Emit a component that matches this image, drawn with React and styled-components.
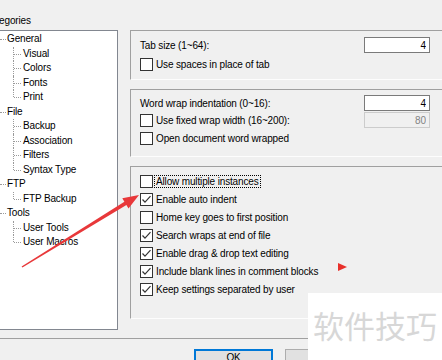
import React from "react";
import styled, { createGlobalStyle } from "styled-components";

const GlobalStyle = createGlobalStyle`
  html, body {
    margin: 0;
    padding: 0;
    background: #f0f0f0;
  }
  body {
    font-family: "Liberation Sans", Arial, sans-serif;
    font-size: 10px;
    letter-spacing: -0.15px;
    color: #000;
  }
`;

const Screen = styled.div`
  position: relative;
  width: 442px;
  height: 360px;
  overflow: hidden;
  background: #f0f0f0;
`;

const Dialog = styled.div`
  margin-left: -20px;
  width: 480px;
  padding-top: 15px;
`;

const Main = styled.div`
  display: flex;
  align-items: flex-start;
  gap: 12px;
`;

const LeftColumn = styled.div`
  width: 138px;
  display: flex;
  flex-direction: column;
`;

const CategoryLabel = styled.div`
  height: 12px;
  line-height: 12px;
  margin-bottom: 3px;
  padding-left: 4px;
`;

const TreeBox = styled.div`
  box-sizing: border-box;
  height: 300px;
  background: #fff;
  border: 1px solid #828790;
  padding-top: 1px;
`;

const TreeRow = styled.div`
  position: relative;
  height: 14.5px;
  line-height: 14.5px;
  white-space: nowrap;
  padding-left: ${(p) => (p.$level === 0 ? 26 : 42)}px;

  &::before {
    content: "";
    position: absolute;
    display: ${(p) => (p.$level === 0 ? "none" : "block")};
    left: 32px;
    top: 0;
    height: ${(p) => (p.$last ? "50%" : "100%")};
    border-left: 1px dotted #9a9a9a;
  }

  &::after {
    content: "";
    position: absolute;
    left: ${(p) => (p.$level === 0 ? 19 : 33)}px;
    top: 50%;
    width: ${(p) => (p.$level === 0 ? 6 : 7)}px;
    border-top: 1px dotted #9a9a9a;
  }
`;

const RightColumn = styled.div`
  width: 320px;
  margin-top: 15px;
  display: flex;
  flex-direction: column;
  gap: 9px;
`;

const GroupBox = styled.div`
  box-sizing: border-box;
  height: ${(p) => p.$height}px;
  border: 1px solid #a0a0a0;
  border-right: none;
  border-bottom-color: #fdfdfd;
  padding: ${(p) => p.$padTop}px 20px 0 9px;
  display: flex;
  flex-direction: column;
`;

const FieldRow = styled.div`
  display: flex;
  align-items: center;
  justify-content: space-between;
  height: ${(p) => p.$height || 16}px;
  margin-top: ${(p) => p.$gap || 0}px;
`;

const CheckRow = styled.label`
  display: flex;
  align-items: center;
  height: ${(p) => p.$height || 15}px;
  margin-top: ${(p) => p.$gap || 0}px;
  white-space: nowrap;
`;

const Box = styled.span`
  box-sizing: border-box;
  width: 13px;
  height: 13px;
  flex: none;
  background: #fff;
  border: 1px solid #333;
  display: flex;
  align-items: center;
  justify-content: center;
`;

const CheckText = styled.span`
  margin-left: 2px;
  line-height: 11px;
  padding: 0 1px;
  outline: ${(p) => (p.$focus ? "1px dotted #000" : "none")};
`;

const NumberInput = styled.input`
  box-sizing: border-box;
  width: 66px;
  height: 16px;
  margin: 0;
  padding: 0 3px 0 0;
  text-align: right;
  font-family: "Liberation Sans", Arial, sans-serif;
  font-size: 10px;
  color: ${(p) => (p.disabled ? "#838383" : "#000")};
  background: ${(p) => (p.disabled ? "#f0f0f0" : "#fff")};
  border: 1px solid ${(p) => (p.disabled ? "#cccccc" : "#7a7a7a")};
  outline: none;
`;

const Footer = styled.div`
  margin-top: 8px;
  border-top: 1px solid #a0a0a0;
  box-shadow: 0 1px 0 #fbfbfb;
  padding: 10px 0 0 214px;
  display: flex;
  gap: 12px;
`;

const Button = styled.div`
  box-sizing: border-box;
  width: 79px;
  height: 23px;
  flex: none;
  background: #e1e1e1;
  border: 1px solid ${(p) => (p.$primary ? "#0078d7" : "#adadad")};
  box-shadow: ${(p) => (p.$primary ? "inset 0 0 0 1px #0078d7" : "none")};
  text-align: center;
  padding-top: 2px;
  line-height: 12px;
`;

const Overlay = styled.svg`
  position: absolute;
  left: 0;
  top: 0;
  pointer-events: none;
`;

const Watermark = styled.div`
  position: absolute;
  left: 308px;
  top: 293px;
  right: 0;
  bottom: 0;
  background: #fff;
  display: flex;
  align-items: center;
  padding: 0 0 5px 5px;
  font-family: "Noto Sans CJK SC", sans-serif;
  font-size: 31px;
  letter-spacing: 0;
  color: #d7d7d7;
  white-space: nowrap;
`;

const tree = [
  { label: "General", children: ["Visual", "Colors", "Fonts", "Print"] },
  { label: "File", children: ["Backup", "Association", "Filters", "Syntax Type"] },
  { label: "FTP", children: ["FTP Backup"] },
  { label: "Tools", children: ["User Tools", "User Macros"] },
];

const editorOptions = [
  { label: "Allow multiple instances", checked: false, focus: true },
  { label: "Enable auto indent", checked: true },
  { label: "Home key goes to first position", checked: false },
  { label: "Search wraps at end of file", checked: true },
  { label: "Enable drag & drop text editing", checked: true },
  { label: "Include blank lines in comment blocks", checked: true },
  { label: "Keep settings separated by user", checked: true },
];

const Checkbox = ({ checked }) => (
  <Box>
    {checked && (
      <svg width="11" height="11" viewBox="0 0 11 11">
        <polyline
          points="1.5,5.5 4,8.2 9.5,2.2"
          fill="none"
          stroke="#333"
          strokeWidth="1.2"
        />
      </svg>
    )}
  </Box>
);

const Option = ({ label, checked, focus, height, gap }) => (
  <CheckRow $height={height} $gap={gap}>
    <Checkbox checked={checked} />
    <CheckText $focus={focus}>{label}</CheckText>
  </CheckRow>
);

const App = () => {
  return (
    <Screen>
      <GlobalStyle />
      <Dialog>
        <Main>
          <LeftColumn>
            <CategoryLabel>Categories</CategoryLabel>
            <TreeBox>
              {tree.map((node) => (
                <React.Fragment key={node.label}>
                  <TreeRow $level={0}>{node.label}</TreeRow>
                  {node.children.map((child, i) => (
                    <TreeRow
                      key={child}
                      $level={1}
                      $last={i === node.children.length - 1}
                    >
                      {child}
                    </TreeRow>
                  ))}
                </React.Fragment>
              ))}
            </TreeBox>
          </LeftColumn>

          <RightColumn>
            <GroupBox $height={50} $padTop={6}>
              <FieldRow>
                <span>Tab size (1~64):</span>
                <NumberInput readOnly value="4" />
              </FieldRow>
              <Option label="Use spaces in place of tab" gap={4} />
            </GroupBox>

            <GroupBox $height={68} $padTop={5}>
              <FieldRow>
                <span>Word wrap indentation (0~16):</span>
                <NumberInput readOnly value="4" />
              </FieldRow>
              <FieldRow $gap={1}>
                <CheckRow>
                  <Checkbox />
                  <CheckText>Use fixed wrap width (16~200):</CheckText>
                </CheckRow>
                <NumberInput readOnly disabled value="80" />
              </FieldRow>
              <Option label="Open document word wrapped" gap={3} />
            </GroupBox>

            <GroupBox $height={153} $padTop={5}>
              {editorOptions.map((o) => (
                <Option key={o.label} {...o} height={18} />
              ))}
            </GroupBox>
          </RightColumn>
        </Main>

        <Footer>
          <Button $primary>OK</Button>
          <Button>Cancel</Button>
        </Footer>
      </Dialog>

      <Overlay width="442" height="360" viewBox="0 0 442 360">
        <polygon
          points="21.6,266.4 124.4,201.7 122.3,198.3 139,195 128.5,208.5 126.4,205.1 22.4,267.6"
          fill="#e8383a"
        />
        <polygon points="338,263 347,267 338,271" fill="#e8302a" />
      </Overlay>

      <Watermark>软件技巧</Watermark>
    </Screen>
  );
};

export default App;
